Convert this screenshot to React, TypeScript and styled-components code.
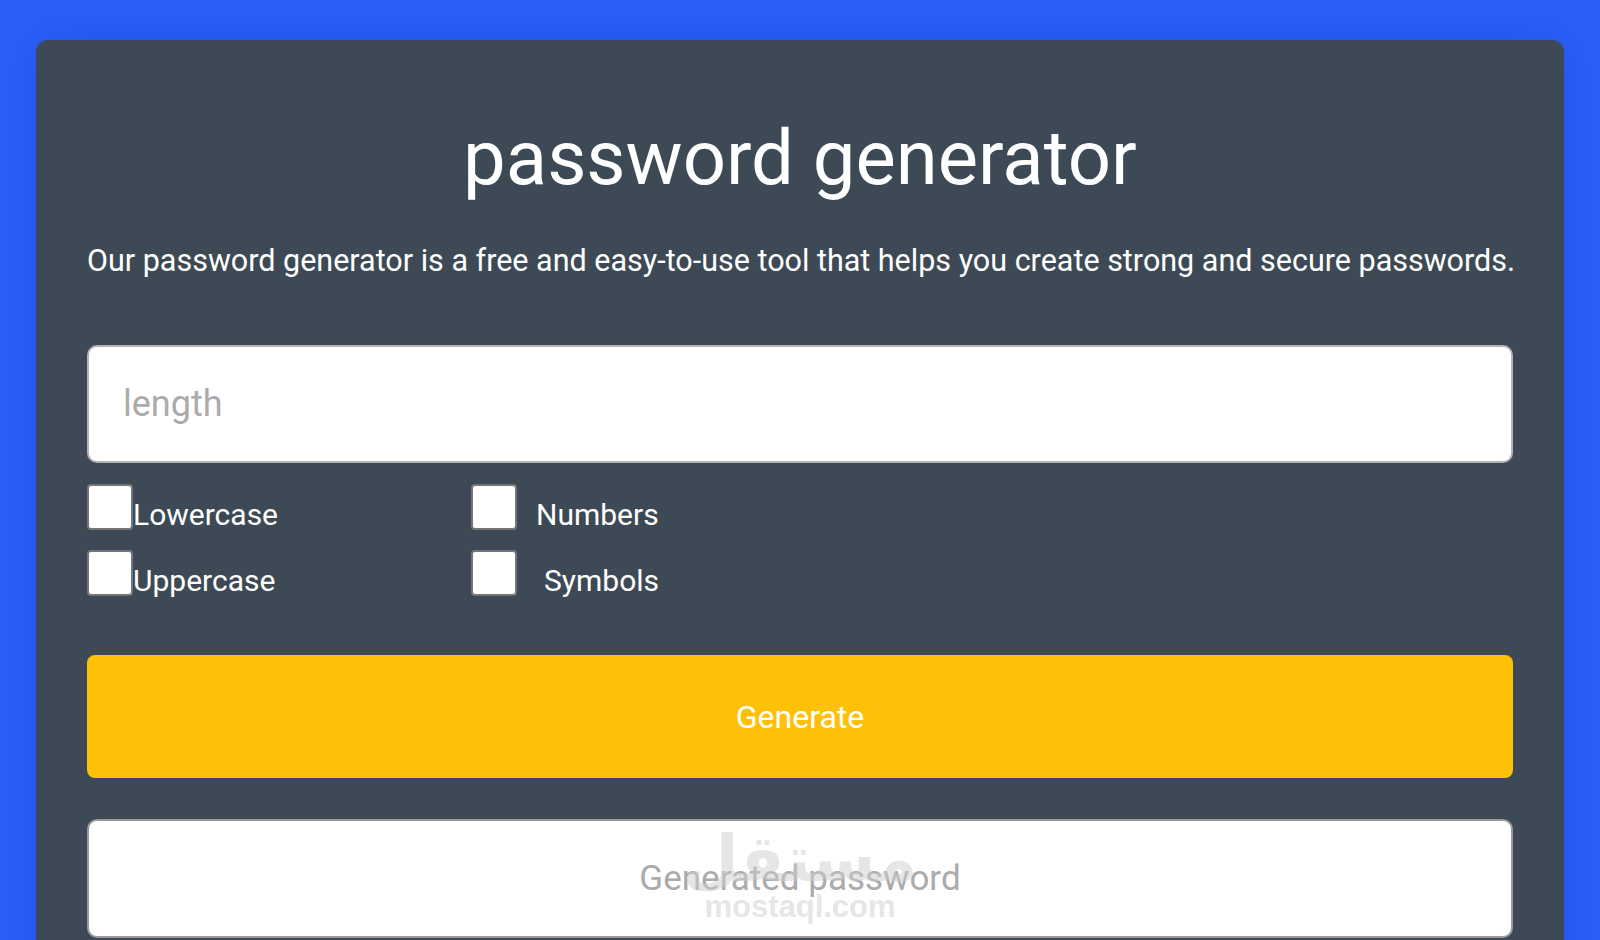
import React from "react";
import styled, { createGlobalStyle } from "styled-components";

const GlobalStyle = createGlobalStyle`
  * { box-sizing: border-box; }
  html, body {
    margin: 0;
    padding: 0;
    background: #2a5ffa;
    font-family: Roboto, "Noto Sans", sans-serif;
  }
`;

const Page = styled.main`
  padding: 40px 36px 40px;
`;

const Card = styled.section`
  background: #3d4a55;
  border-radius: 12px;
  padding: 0 51px 50px;
  text-align: center;
  color: #ffffff;
  box-shadow: 0 0 40px rgba(10, 30, 90, 0.18);
`;

const Title = styled.h1`
  margin: 0;
  padding-top: 72px;
  font-size: 76px;
  font-weight: 400;
  line-height: 92px;
  letter-spacing: 0;
`;

const Subtitle = styled.p`
  margin: 39px 0 0;
  font-size: 30.5px;
  font-weight: 400;
  line-height: 36px;
  white-space: nowrap;
`;

const Field = styled.input<{ $center?: boolean }>`
  display: block;
  width: 100%;
  height: ${(p) => (p.$center ? "119px" : "118px")};
  background: #ffffff;
  border: 2px solid ${(p) => (p.$center ? "#9a9a9a" : "#b4b4b4")};
  border-radius: 10px;
  padding: 0 ${(p) => (p.$center ? "0" : "34px")};
  font-family: Roboto, "Noto Sans", sans-serif;
  font-size: ${(p) => (p.$center ? "35px" : "36px")};
  text-align: ${(p) => (p.$center ? "center" : "left")};
  color: #333;
  outline: none;
  &::placeholder {
    color: #ababab;
  }
`;

const LengthField = styled(Field)`
  margin-top: 66px;
`;

const Options = styled.div`
  display: grid;
  grid-template-columns: 384px 1fr;
  row-gap: 21px;
  margin-top: 22px;
  text-align: left;
`;

const Option = styled.label`
  display: flex;
  align-items: flex-end;
  height: 45px;
  cursor: pointer;
`;

const Box = styled.input`
  appearance: none;
  -webkit-appearance: none;
  flex: none;
  width: 46px;
  height: 46px;
  margin: 0;
  background: #ffffff;
  border: 2px solid #767676;
  border-radius: 4px;
  cursor: pointer;
`;

const OptionText = styled.span<{ $gap: number }>`
  margin-left: ${(p) => p.$gap}px;
  font-size: 30px;
  line-height: 30px;
  color: #ffffff;
`;

const GenerateButton = styled.button`
  display: block;
  width: 100%;
  height: 123px;
  margin-top: 59px;
  background: #ffc107;
  border: none;
  border-radius: 8px;
  color: #ffffff;
  font-family: Roboto, "Noto Sans", sans-serif;
  font-size: 32px;
  cursor: pointer;
`;

const OutputWrap = styled.div`
  position: relative;
  margin-top: 41px;
`;

const Watermark = styled.div`
  position: absolute;
  left: 0;
  right: 0;
  top: 4px;
  display: flex;
  flex-direction: column;
  align-items: center;
  pointer-events: none;
  color: rgba(205, 205, 205, 0.5);
  font-weight: 700;
`;

const WatermarkArabic = styled.span`
  font-family: "DejaVu Sans", sans-serif;
  font-size: 64px;
  line-height: 72px;
`;

const WatermarkLatin = styled.span`
  font-family: "Liberation Sans", Arial, sans-serif;
  font-size: 31px;
  line-height: 30px;
  margin-top: -3px;
`;

const options = [
  { label: "Lowercase", gap: 0 },
  { label: "Numbers", gap: 19 },
  { label: "Uppercase", gap: 0 },
  { label: "Symbols", gap: 27 },
];

export default function App() {
  return (
    <>
      <GlobalStyle />
      <Page>
        <Card>
          <Title>password generator</Title>
          <Subtitle>
            Our password generator is a free and easy-to-use tool that helps you create strong and secure passwords.
          </Subtitle>
          <LengthField type="number" placeholder="length" />
          <Options>
            {options.map((o) => (
              <Option key={o.label}>
                <Box type="checkbox" />
                <OptionText $gap={o.gap}>{o.label}</OptionText>
              </Option>
            ))}
          </Options>
          <GenerateButton type="button">Generate</GenerateButton>
          <OutputWrap>
            <Field $center readOnly placeholder="Generated password" />
            <Watermark>
              <WatermarkArabic>مستقل</WatermarkArabic>
              <WatermarkLatin>mostaql.com</WatermarkLatin>
            </Watermark>
          </OutputWrap>
        </Card>
      </Page>
    </>
  );
}
